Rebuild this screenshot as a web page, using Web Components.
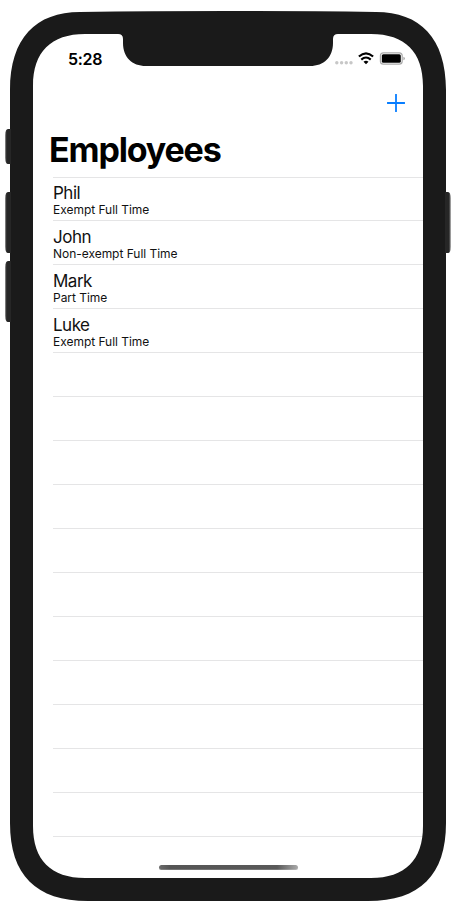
<!DOCTYPE html>
<html lang="en"><head><meta charset="utf-8"><title>Employees</title>
<style>body{margin:0;background:#fff;font-family:Inter,"Liberation Sans",sans-serif;color:#000}</style></head>
<body>
<phone-frame>
<status-bar time="5:28"></status-bar>
<nav-header heading="Employees"></nav-header>
<employee-list>
<employee-row name="Phil" kind="Exempt Full Time"></employee-row>
<employee-row name="John" kind="Non-exempt Full Time"></employee-row>
<employee-row name="Mark" kind="Part Time"></employee-row>
<employee-row name="Luke" kind="Exempt Full Time"></employee-row>
</employee-list>
<home-indicator></home-indicator>
</phone-frame>
<script>
const define=(tag,render)=>customElements.define(tag,class extends HTMLElement{
  connectedCallback(){ if(!this.shadowRoot) this.attachShadow({mode:'open'}).innerHTML=render(this); }
});
define('phone-frame',()=>`<style>
:host{display:block;position:relative;width:456px;height:902px;box-sizing:border-box;padding:34px 33px 24px;overflow:hidden}
svg{position:absolute;left:0;top:0;z-index:1;pointer-events:none}
main{height:844px;display:flex;flex-direction:column}
</style>
<svg width="456" height="902" viewBox="0 0 456 902">
<defs><linearGradient id="g"><stop stop-color="#444"/><stop offset=".35" stop-color="#262626"/></linearGradient>
<linearGradient id="h" x1="1" x2="0"><stop stop-color="#777"/><stop offset=".35" stop-color="#262626"/></linearGradient></defs>
<path fill="#1a1a1a" fill-rule="evenodd" d="M10 90C10 38 36 12 80 12Q150 11 228 11T376 12C420 12 446 38 446 90V823C446 875 420 901 368 901H88C36 901 10 875 10 823ZM33 86V826C33 860 51 878 85 878H371C405 878 423 860 423 826V86C423 52 405 34 371 34H338Q333 34 333 39V43C333 57 324 66 310 66H146C132 66 123 57 123 43V39Q123 34 118 34H85C51 34 33 52 33 86Z"/>
<g fill="url(#g)"><path d="M11 129H8Q5.3 129 5.3 135V158Q5.3 164 8 164H11Z"/><path d="M11 192H8Q5.3 192 5.3 198V247Q5.3 253 8 253H11Z"/><path d="M11 261H8Q5.3 261 5.3 267V316Q5.3 322 8 322H11Z"/></g>
<path fill="url(#h)" d="M445 192H448Q450.7 192 450.7 198V247Q450.7 253 448 253H445Z"/>
</svg><main><slot></slot></main>`);
define('status-bar',e=>`<style>
:host{display:flex;height:44px;box-sizing:border-box;padding:15px 17px 0 35px;justify-content:space-between;align-items:flex-start}
span{font-size:16px;line-height:20px;font-weight:600;letter-spacing:-.3px}
svg{display:block}
</style><span>${e.getAttribute('time')}</span>
<svg width="72" height="18" viewBox="334 49 72 18">
<g fill="#c7c7c7"><circle cx="336.8" cy="62.8" r="1.7"/><circle cx="341.6" cy="62.8" r="1.7"/><circle cx="346.3" cy="62.8" r="1.7"/><circle cx="351" cy="62.8" r="1.7"/></g>
<g fill="none" stroke="#000" stroke-width="2.1"><path d="M358.9 56.6Q366 50 373.1 56.6"/><path d="M361.3 59.6Q366 55.4 370.7 59.6"/></g>
<path d="M363.5 61.7Q366 59.8 368.5 61.7L366 64.3Z"/>
<rect x="380.4" y="52.8" width="21.8" height="11.4" rx="3" fill="#fff" stroke="#aaa" stroke-width="1.2"/><rect x="381.8" y="54.2" width="19" height="8.6" rx="1.5"/><path fill="#aaa" d="M403.4 56.8Q405 57.3 405 58.5T403.4 60.2Z"/>
</svg>`);
define('nav-header',e=>`<style>
:host{display:flex;flex-direction:column;height:99px}
button{align-self:flex-end;width:18px;height:18px;margin:16px 18px 0 0;padding:0;border:0;background:none}
svg{display:block}
h1{margin:17px 0 0 16px;font-size:34px;line-height:41px;font-weight:700;letter-spacing:-1.15px}
</style><button aria-label="Add"><svg width="18" height="18"><path d="M9 .5V17.5M.5 9H17.5" stroke="#087eff" stroke-width="1.8" stroke-linecap="round"/></svg></button>
<h1>${e.getAttribute('heading')}</h1>`);
define('employee-list',()=>`<style>
:host{display:flex;flex-direction:column;margin-left:20px;height:660px}
i{display:block;flex:none;height:44px;box-sizing:border-box;border-top:1px solid #e5e5e6}
i:last-child{height:1px}
::slotted(:first-child){height:43px!important;padding-top:5px!important}
</style><slot></slot>${'<i></i>'.repeat(12)}`);
define('employee-row',e=>`<style>
:host{display:block;flex:none;height:44px;box-sizing:border-box;border-top:1px solid #e5e5e6;padding-top:6px}
b,span{display:block;white-space:nowrap;font-weight:400}
b{font-size:17px;line-height:20px;letter-spacing:-.5px;color:#111}
span{font-size:12px;line-height:14px;letter-spacing:-.03px;color:#111}
</style><b>${e.getAttribute('name')}</b><span>${e.getAttribute('kind')}</span>`);
define('home-indicator',()=>`<style>
:host{display:block;margin:28px 0 0 125.5px;width:139px;height:5px;border-radius:3px;background:linear-gradient(90deg,#6b6b6b,#555 8%,#595959 85%,#aaa);box-shadow:inset 0 -1px #ffffff30}
</style>`);
</script></body></html>
